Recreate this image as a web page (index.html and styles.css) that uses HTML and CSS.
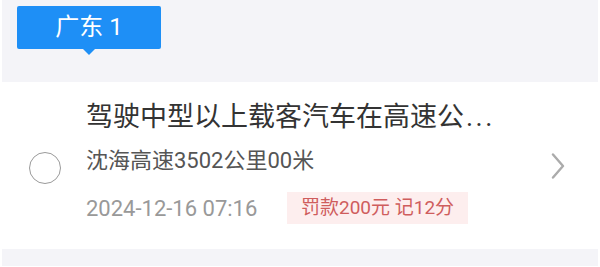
FILE: index.html
```html
<!DOCTYPE html>
<html lang="zh">
<head>
<meta charset="utf-8">
<link rel="stylesheet" href="styles.css">
</head>
<body>
<div class="page">
  <div class="top">
    <div class="tag">广东 1</div>
  </div>
  <div class="card">
    <div class="check"><span class="circle"></span></div>
    <div class="content">
      <div class="title">驾驶中型以上载客汽车在高速公<span class="dots">...</span></div>
      <div class="place">沈海高速3502公里00米</div>
      <div class="meta">
        <span class="date">2024-12-16 07:16</span>
        <span class="penalty">罚款200元 记12分</span>
      </div>
    </div>
    <div class="arrow">
      <svg width="14" height="26" viewBox="0 0 14 26"><path d="M2 1.5 L12 13 L2 24.5" fill="none" stroke="#ababab" stroke-width="2.4" stroke-linecap="round" stroke-linejoin="round"/></svg>
    </div>
  </div>
  <div class="bottom"></div>
</div>
</body>
</html>
```
FILE: styles.css
```css
* { box-sizing: border-box; }
html, body { margin: 0; padding: 0; background: #fff; }
body { font-family: Roboto, "Noto Sans CJK SC", sans-serif; }
.page { margin: 0 2px; }
.top {
  background: #f4f4f8;
  height: 82px;
  padding: 6px 0 0 15px;
}
.tag {
  position: relative;
  width: 144px;
  height: 43px;
  background: #1e8ff6;
  border-radius: 2px;
  color: #fff;
  font-size: 24px;
  line-height: 43px;
  text-align: center;
}
.tag::after {
  content: "";
  position: absolute;
  left: 66px;
  bottom: -6px;
  border-left: 6px solid transparent;
  border-right: 6px solid transparent;
  border-top: 6px solid #1e8ff6;
}
.card {
  display: flex;
  align-items: center;
  background: #fff;
  height: 167px;
}
.check {
  width: 84px;
  display: flex;
  justify-content: center;
  padding-left: 2px;
  padding-top: 5px;
}
.circle {
  width: 32px;
  height: 32px;
  border: 1.6px solid #9a9a9a;
  border-radius: 50%;
}
.content {
  flex: 1;
  margin-top: -8px;
}
.title {
  font-size: 27px;
  line-height: 36px;
  color: #333;
}
.dots { letter-spacing: 2.5px; margin-left: 2px; }
.place {
  font-size: 22px;
  line-height: 32px;
  color: #555;
  margin-top: 10px;
}
.meta {
  display: flex;
  align-items: center;
  margin-top: 15px;
}
.date {
  font-size: 22px;
  color: #999;
  width: 201px;
}
.penalty {
  background: #fdeeee;
  color: #cf5d5d;
  font-size: 19px;
  height: 32px;
  line-height: 32px;
  padding: 0 14px;
}
.arrow {
  width: 49px;
  display: flex;
  justify-content: flex-start;
  padding-left: 2px;
}
.arrow svg { display: block; }
.bottom {
  background: #f4f4f8;
  height: 17px;
}
```
